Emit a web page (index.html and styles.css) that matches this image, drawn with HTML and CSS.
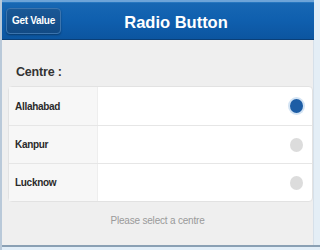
FILE: index.html
```html
<!DOCTYPE html>
<html>
<head>
<meta charset="utf-8">
<link rel="stylesheet" href="styles.css">
</head>
<body>
<div class="frame">
  <header class="bar">
    <button class="btn">Get Value</button>
    <h1 class="title">Radio Button</h1>
  </header>
  <main class="content">
    <div class="legend">Centre :</div>
    <div class="list">
      <div class="row">
        <div class="label">Allahabad</div>
        <div class="field"><span class="radio on"></span></div>
      </div>
      <div class="row">
        <div class="label">Kanpur</div>
        <div class="field"><span class="radio"></span></div>
      </div>
      <div class="row">
        <div class="label">Lucknow</div>
        <div class="field"><span class="radio"></span></div>
      </div>
    </div>
    <div class="hint">Please select a centre</div>
  </main>
  <div class="bottom"></div>
</div>
</body>
</html>
```
FILE: styles.css
```css
html, body { margin: 0; padding: 0; }
body {
  width: 320px; height: 250px; overflow: hidden;
  font-family: "Liberation Sans", Arial, sans-serif;
  background: #e4eef6;
}
.frame {
  width: 320px; height: 250px;
  display: flex; flex-direction: column;
  box-sizing: border-box;
  border-left: 2px solid #b9c9d9;
}
.bar {
  height: 40px; flex: none;
  margin-right: 6px;
  box-sizing: border-box;
  background: linear-gradient(#2f7fc6 0, #1767b3 4%, #0f5fae 50%, #0c55a0 100%);
  border-top: 2px solid #6da4d8;
  border-bottom: 1px solid #0a3f78;
  display: flex; align-items: center;
  position: relative;
}
.btn {
  margin-left: 4px;
  width: 55px; height: 26px;
  box-sizing: border-box;
  background: linear-gradient(#1a5896, #124a85);
  border: 1px solid #3c74ad;
  border-radius: 4px;
  box-shadow: 0 1px 2px rgba(0,0,0,.35);
  color: #fff;
  font-family: "Liberation Sans Narrow", "Liberation Sans", Arial, sans-serif;
  font-weight: bold; font-size: 10px;
  letter-spacing: -0.3px;
  padding: 0;
}
.title {
  position: absolute; left: 0; right: 0; top: 10px;
  margin: 0; text-align: center;
  padding-left: 36px;
  color: #fff; font-size: 16.5px; font-weight: bold;
  line-height: 20px;
  pointer-events: none;
}
.content {
  flex: 1;
  margin-right: 6px;
  background: #efefef;
  border-right: 1px solid #d6e0ea;
  padding: 24px 0 0 6px;
  display: flex; flex-direction: column;
}
.legend {
  font-size: 12.5px; font-weight: bold; color: #333;
  letter-spacing: -0.2px;
  padding-left: 8px; height: 22px; line-height: 16px;
}
.list {
  background: #fff;
  border: 1px solid #e2e2e2;
  border-radius: 4px;
}
.row {
  height: 37px;
  display: flex;
  border-top: 1px solid #e6e6e6;
}
.row:first-child { border-top: 0; height: 38px; }
.label {
  width: 82px; padding-left: 6px;
  background: #f7f7f7;
  border-right: 1px solid #eeeeee;
  display: flex; align-items: center;
  font-size: 10px; font-weight: bold; color: #2a2a2a;
  letter-spacing: -0.3px;
}
.field {
  flex: 1; display: flex; align-items: center; justify-content: flex-end;
  padding-right: 9px;
}
.radio {
  width: 13px; height: 14px; border-radius: 50%;
  background: #dcdcdc;
}
.radio.on {
  background: #1d5da5;
  box-shadow: 0 0 0 2px #d3e3f3;
}
.hint {
  text-align: center;
  margin-top: 13px;
  font-size: 10px; color: #9a9a9a;
  letter-spacing: -0.2px;
  padding-right: 6px;
}
.bottom {
  height: 3px; flex: none;
  background: #e2eef8;
  border-top: 2px solid #8aa0b4;
}
```
